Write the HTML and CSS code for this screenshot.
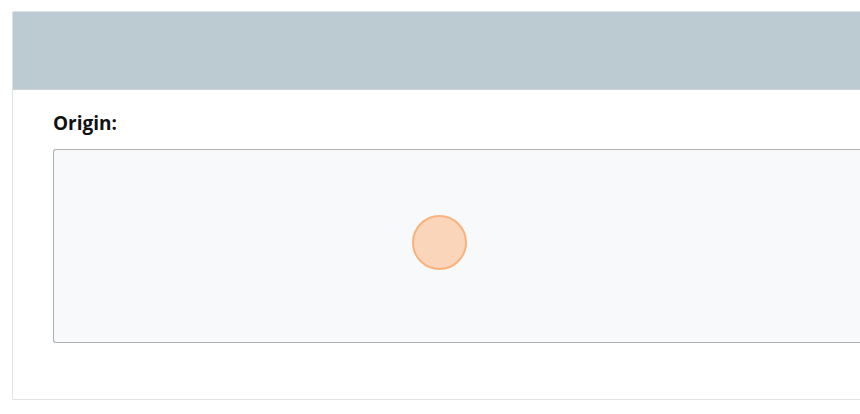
FILE: index.html
```html
<!DOCTYPE html>
<html>
<head>
<meta charset="utf-8">
<link rel="stylesheet" href="styles.css">
</head>
<body>
<div class="card">
  <div class="card-header"></div>
  <div class="card-body">
    <div class="label">Origin:</div>
    <div class="canvas">
      <div class="dot"></div>
    </div>
  </div>
</div>
</body>
</html>
```
FILE: styles.css
```css
html, body {
  margin: 0;
  padding: 0;
  background: #ffffff;
  overflow: hidden;
  width: 860px;
  height: 414px;
}
body {
  font-family: "Open Sans", "Noto Sans", sans-serif;
  padding: 11px 0 0 12px;
  box-sizing: border-box;
}
.card {
  width: 848px;
  border: 1px solid #dfe2e4;
  border-right: none;
  border-radius: 2px 0 0 2px;
  background: #ffffff;
  box-sizing: border-box;
}
.card-header {
  height: 77px;
  background: #bccad2;
  border-bottom: 1px solid #c9d3d8;
}
.card-body {
  padding: 22px 0 56px 40px;
}
.label {
  font-weight: 700;
  font-size: 19px;
  line-height: 22px;
  color: #111111;
  margin-bottom: 15px;
}
.canvas {
  position: relative;
  height: 192px;
  border: 1px solid #b0b0b0;
  border-right: none;
  border-radius: 3px 0 0 3px;
  background: #f8f9fa;
}
.dot {
  position: absolute;
  left: 358px;
  top: 65px;
  width: 51px;
  height: 51px;
  border: 2px solid #f8b37d;
  border-radius: 50%;
  background: #fad5ba;
}
```
